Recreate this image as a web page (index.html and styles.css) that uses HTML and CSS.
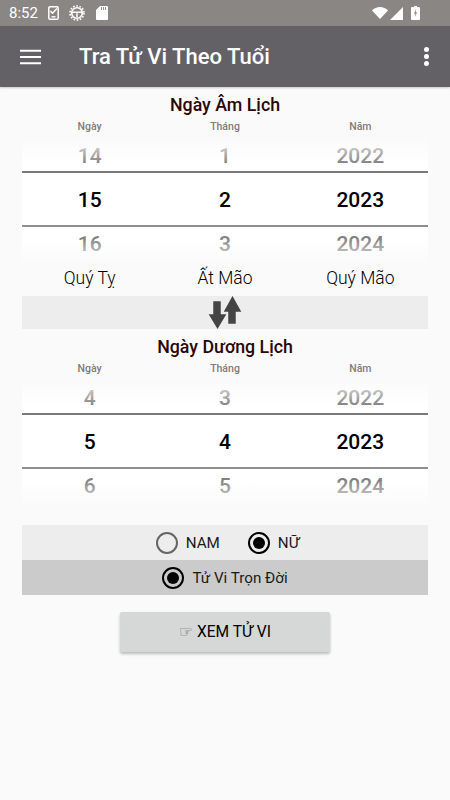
FILE: index.html
```html
<!DOCTYPE html>
<html lang="vi">
<head>
<meta charset="UTF-8">
<meta name="viewport" content="width=device-width, initial-scale=1.0">
<title>Tra Tử Vi Theo Tuổi</title>
<link rel="stylesheet" href="styles.css">
</head>
<body>
<div class="status-bar">
  <div class="status-left">
    <span class="clock">8:52</span>
    <svg class="icon-phone" viewBox="0 0 11 14"><rect x="0.800" y="0.800" width="9.400" height="12.400" rx="1.200" fill="none" stroke="#fff" stroke-width="1.500"/><path d="M2.500 5l2 2.200L9 2.500" fill="none" stroke="#fff" stroke-width="1.500"/><path d="M3.500 10.800h4" stroke="#fff" stroke-width="1.400"/></svg>
    <svg class="icon-gear" viewBox="0 0 16 16"><circle cx="8" cy="8" r="5.300" fill="none" stroke="#fff" stroke-width="1.600"/><circle cx="8" cy="8" r="7" fill="none" stroke="#fff" stroke-width="1.600" stroke-dasharray="1.700 1.500"/><path d="M3 7.200h10M8 7.200v5" stroke="#fff" stroke-width="1.400"/></svg>
    <svg class="icon-sd" viewBox="0 0 12 14"><path d="M4 0h7a1 1 0 0 1 1 1v12a1 1 0 0 1-1 1H1a1 1 0 0 1-1-1V4z" fill="#fff"/><path d="M5.500 1v3M7.500 1v3M9.500 1v3" stroke="#8a8684" stroke-width="0.900"/></svg>
  </div>
  <div class="status-right">
    <svg class="wifi" viewBox="0 0 16 12"><path d="M0 3.600C2 1.400 5 0 8 0s6 1.400 8 3.600L8 12z" fill="#fff"/></svg>
    <svg class="signal" viewBox="0 0 13 13"><path d="M13 0v13H0z" fill="#fff"/></svg>
    <svg class="battery" viewBox="0 0 9 14"><path d="M3 0h3v1h2a1 1 0 0 1 1 1v11a1 1 0 0 1-1 1H1a1 1 0 0 1-1-1V2a1 1 0 0 1 1-1h2z" fill="#fff"/><path d="M5.200 3L3 7.600h1.500L3.800 11 6 6.400H4.500z" fill="#77736f"/></svg>
  </div>
</div>

<header class="app-bar">
  <svg class="menu-icon" viewBox="0 0 22 16"><path d="M0 1.500h22M0 8h22M0 14.500h22" stroke="#fff" stroke-width="2"/></svg>
  <h1 class="app-title">Tra Tử Vi Theo Tuổi</h1>
  <div class="more-icon"><i></i><i></i><i></i></div>
</header>

<main class="content">
  <section class="date-block">
    <h2 class="block-title">Ngày Âm Lịch</h2>
    <div class="col-labels"><span>Ngày</span><span>Tháng</span><span>Năm</span></div>
    <div class="picker">
      <div class="row"><span>14</span><span>1</span><span>2022</span></div>
      <div class="row selected"><span>15</span><span>2</span><span>2023</span></div>
      <div class="row"><span>16</span><span>3</span><span>2024</span></div>
    </div>
  </section>

  <div class="can-chi"><span>Quý Tỵ</span><span>Ất Mão</span><span>Quý Mão</span></div>

  <div class="swap-band">
    <svg class="swap-icon" viewBox="0 0 34 33"><path d="M6 6h6v13h5l-7.500 12.500L2 19h4z" fill="#444" stroke="#444" stroke-width="1.500"/><path d="M21 27h6V15h5L24.500 1.500 17 15h4z" fill="#444" stroke="#444" stroke-width="1.500"/></svg>
  </div>

  <section class="date-block">
    <h2 class="block-title">Ngày Dương Lịch</h2>
    <div class="col-labels"><span>Ngày</span><span>Tháng</span><span>Năm</span></div>
    <div class="picker">
      <div class="row"><span>4</span><span>3</span><span>2022</span></div>
      <div class="row selected"><span>5</span><span>4</span><span>2023</span></div>
      <div class="row"><span>6</span><span>5</span><span>2024</span></div>
    </div>
  </section>

  <div class="radio-band gender">
    <label class="radio"><span class="dot"></span>NAM</label>
    <label class="radio checked"><span class="dot"></span>NỮ</label>
  </div>
  <div class="radio-band kind">
    <label class="radio checked"><span class="dot"></span>Tử Vi Trọn Đời</label>
  </div>

  <div class="action">
    <button class="view-btn"><span class="hand">☞</span> XEM TỬ VI</button>
  </div>
</main>
</body>
</html>
```

FILE: styles.css
```css
* {
  box-sizing: border-box;
}
body {
  margin: 0;
  min-height: 800px;
  background: #fafafa;
  font-family: Roboto, sans-serif;
  color: #000;
}

/* thanh trang thai */
.status-bar {
  height: 26px;
  background: #8a8684;
  color: #fff;
  display: flex;
  justify-content: space-between;
  align-items: center;
  padding: 0 30px 0 9px;
}
.status-left, .status-right {
  display: flex;
  align-items: center;
}
.clock {
  font-size: 15px;
  margin-right: 10px;
}
.icon-phone {
  width: 11px;
  height: 14px;
  margin-right: 10px;
}
.icon-gear {
  width: 16px;
  height: 16px;
  margin-right: 11px;
}
.icon-sd {
  width: 12px;
  height: 14px;
}
.wifi {
  width: 16px;
  height: 12px;
  margin-right: 2px;
}
.signal {
  width: 13px;
  height: 13px;
  margin-right: 8px;
}
.battery {
  width: 9px;
  height: 14px;
}

.app-bar {
  height: 61px;
  background: #636166;
  display: flex;
  align-items: center;
  padding: 0 21px 0 20px;
  box-shadow: 0 1px 2px rgba(0, 0, 0, 0.2);
}
.menu-icon {
  width: 21px;
  height: 16px;
  margin-right: 38px;
}
.app-title {
  flex: 1;
  margin: 0;
  color: #fff;
  font-size: 22px;
  font-weight: 500;
}
.more-icon {
  display: flex;
  flex-direction: column;
  gap: 2px;
}
.more-icon i {
  width: 5px;
  height: 5px;
  border-radius: 50%;
  background: #fff;
}

.content {
  padding: 0 22px;
}
.block-title {
  margin: 0;
  padding-top: 7px;
  height: 28px;
  line-height: 21px;
  text-align: center;
  font-size: 17.800px;
  font-weight: 500;
  color: #2a0606;
}
.col-labels, .row, .can-chi {
  display: grid;
  grid-template-columns: repeat(3, 1fr);
  text-align: center;
}
.col-labels {
  height: 25px;
  padding-top: 5px;
  line-height: 14px;
  font-size: 10.500px;
  font-weight: 500;
  color: #817b7b;
}

/* cot chon ngay */
.picker {
  position: relative;
  height: 122px;
  background: #fff;
}
.picker::before, .picker::after {
  content: "";
  position: absolute;
  left: 0;
  right: 0;
  height: 24px;
}
.picker::before {
  top: 0;
  background: linear-gradient(rgba(250, 250, 250, 0.85), rgba(255, 255, 255, 0));
}
.picker::after {
  bottom: 0;
  background: linear-gradient(rgba(255, 255, 255, 0), rgba(250, 250, 250, 0.85));
}
.row {
  height: 31px;
  line-height: 32px;
  font-size: 21px;
  font-weight: 500;
  color: #808080;
}
.row.selected {
  height: 56px;
  line-height: 55px;
  color: #000;
  border-top: 2px solid #7a7a7a;
  border-bottom: 2px solid #8f8f8f;
}
.row.selected + .row {
  line-height: 35px;
}

.can-chi {
  height: 34px;
  line-height: 32px;
  font-size: 17.500px;
  font-weight: 300;
}
.swap-band {
  height: 33px;
  background: #ededed;
  display: flex;
  justify-content: center;
  align-items: center;
}
.swap-icon {
  width: 34px;
  height: 33px;
}

.radio-band {
  height: 35px;
  display: flex;
  justify-content: center;
  align-items: center;
  font-size: 15.200px;
}
.gender {
  margin-top: 21px;
  padding-left: 5px;
  background: #ededed;
  gap: 28px;
}
.kind {
  background: #cbcbcb;
}
.radio {
  display: flex;
  align-items: center;
  gap: 8px;
  color: #1a1a1a;
}
.dot {
  width: 22px;
  height: 22px;
  border: 2px solid #666;
  border-radius: 50%;
  display: flex;
  justify-content: center;
  align-items: center;
}
.checked .dot {
  border-color: #000;
}
.checked .dot::after {
  content: "";
  width: 12px;
  height: 12px;
  border-radius: 50%;
  background: #000;
}

.action {
  display: flex;
  justify-content: center;
  padding-top: 17px;
}
.view-btn {
  width: 210px;
  height: 40px;
  border: none;
  border-radius: 2px;
  background: #d6d7d7;
  box-shadow: 0 2px 3px rgba(0, 0, 0, 0.25);
  font-family: Roboto, sans-serif;
  font-size: 15.600px;
  color: #000;
}
.hand {
  font-family: "DejaVu Sans", sans-serif;
  color: #555;
}
```
